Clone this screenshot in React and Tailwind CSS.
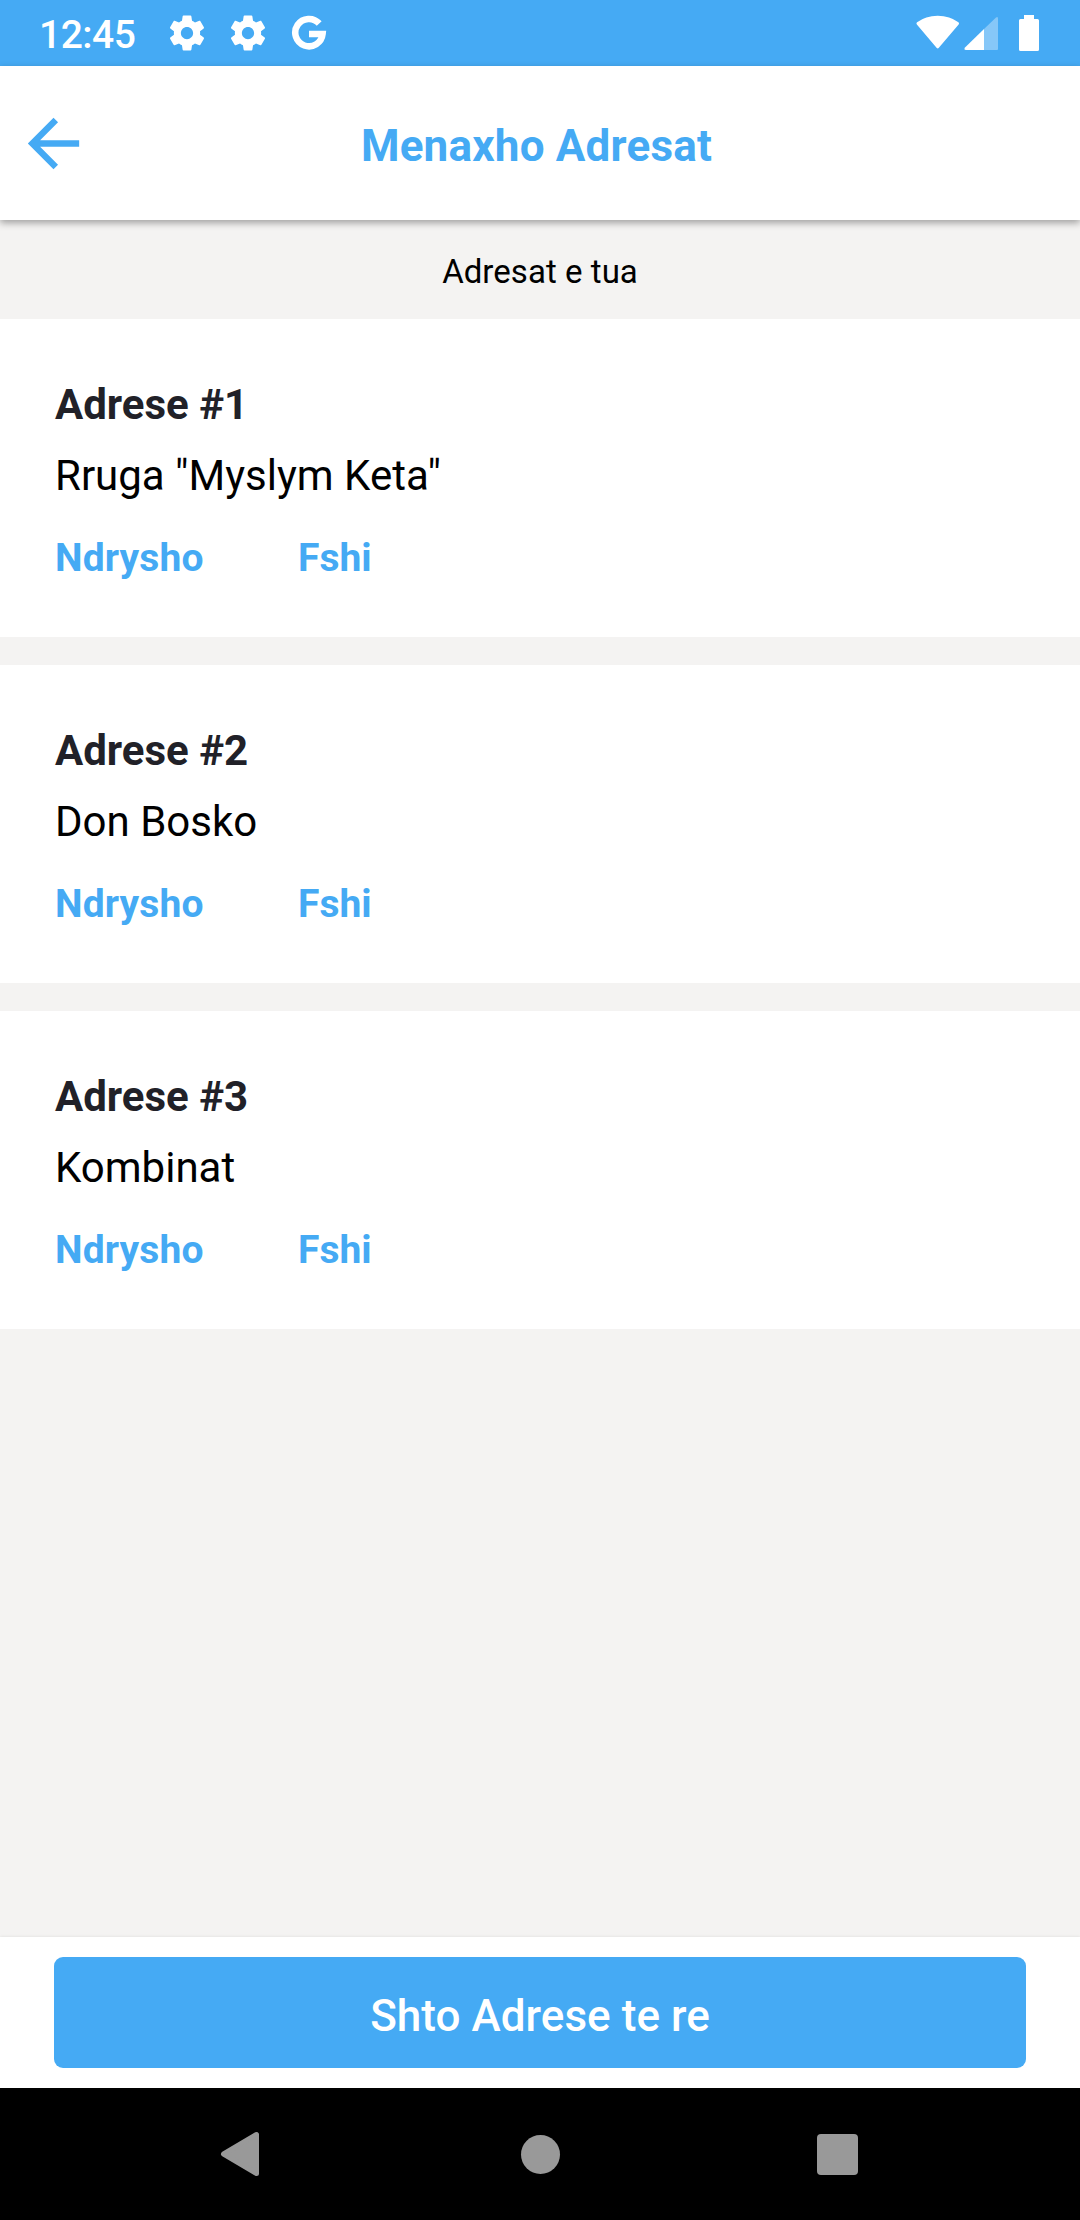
const addresses = ['Rruga "Myslym Keta"', 'Don Bosko', 'Kombinat'];

function Gear() {
  return (
    <svg className="size-[42px] shrink-0" viewBox="0 0 24 24" fill="white">
      <path d="M19.43 12.98c.04-.32.07-.64.07-.98s-.03-.66-.07-.98l2.11-1.65c.19-.15.24-.42.12-.64l-2-3.46c-.12-.22-.39-.3-.61-.22l-2.49 1c-.52-.4-1.08-.73-1.69-.98l-.38-2.65C14.46 2.18 14.25 2 14 2h-4c-.25 0-.46.18-.49.42l-.38 2.65c-.61.25-1.17.59-1.69.98l-2.49-1c-.23-.09-.49 0-.61.22l-2 3.46c-.13.22-.07.49.12.64l2.11 1.65c-.04.32-.07.65-.07.98s.03.66.07.98l-2.11 1.65c-.19.15-.24.42-.12.64l2 3.46c.12.22.39.3.61.22l2.49-1c.52.4 1.08.73 1.69.98l.38 2.65c.03.24.24.42.49.42h4c.25 0 .46-.18.49-.42l.38-2.65c.61-.25 1.17-.59 1.69-.98l2.49 1c.23.09.49 0 .61-.22l2-3.46c.12-.22.07-.49-.12-.64l-2.11-1.65zM12 15.5c-1.93 0-3.5-1.57-3.5-3.5s1.57-3.5 3.5-3.5 3.5 1.57 3.5 3.5-1.57 3.5-3.5 3.5z" />
    </svg>
  );
}

function StatusBar() {
  return (
    <div className="flex h-[66px] shrink-0 items-center bg-[#45aaf4] text-white">
      <span className="ml-[39px] w-[126.5px] pt-[4px] text-[39px] leading-none font-medium tracking-[-0.5px]">12:45</span>
      <Gear />
      <div className="w-[19px]" />
      <Gear />
      <svg className="ml-[22px] size-[36px]" viewBox="0 0 36 36" fill="none" stroke="white" strokeWidth="6.5">
        <path d="M28.2 8.500 A13.700 13.700 0 1 0 31.600 19 H18" />
      </svg>
      <svg className="ml-auto h-[36px] w-[46px]" viewBox="0 0 46 36" fill="white" stroke="white" strokeWidth="3" strokeLinejoin="round">
        <path d="M4 8.500 Q12 2.200 23.700 2.200 Q35.500 2.200 43.500 8.500 L23.700 31.800 Z" />
      </svg>
      <svg className="ml-[3px] h-[36px] w-[36px]" viewBox="0 0 36 36" fill="white" strokeLinejoin="round">
        <path d="M35 3.500 Q35 1 33 2.500 L21 14 V35 H34 Q35 35 35 34 Z" fillOpacity="0.35" />
        <path d="M21 14 L2 32.500 Q0.500 35 3 35 H21 Z" />
      </svg>
      <svg className="mr-[41px] ml-[20px] h-[36px] w-[20px]" viewBox="0 0 20 36" fill="white">
        <path d="M5 0 H15 V4 H18.500 Q20 4 20 5.500 V34.500 Q20 36 18.500 36 H1.500 Q0 36 0 34.500 V5.500 Q0 4 1.500 4 H5 Z" />
      </svg>
    </div>
  );
}

function NavBar() {
  return (
    <nav className="flex h-[132px] shrink-0 items-center bg-black">
      <svg className="ml-[220px] h-[46px] w-[39px]" viewBox="0 0 39 46" fill="#999" stroke="#999" strokeWidth="5" strokeLinejoin="round">
        <path d="M3.500 23 L36.500 3.500 V42.500 Z" />
      </svg>
      <div className="ml-[262px] size-[39px] rounded-full bg-[#999]" />
      <div className="ml-[257px] size-[41px] rounded-[4px] bg-[#999]" />
    </nav>
  );
}

export default function App() {
  return (
    <div className="flex h-[2220px] w-[1080px] flex-col overflow-hidden bg-[#f4f3f2] font-['Roboto',sans-serif] text-black">
      <StatusBar />
      <header className="z-10 flex h-[154px] shrink-0 items-center bg-white shadow-[0_3px_7px_rgba(0,0,0,0.34)]">
        <svg className="ml-[15px] size-[77px]" viewBox="0 0 24 24" fill="#45aaf4">
          <path d="M20 11H7.83l5.59-5.590L12 4l-8 8 8 8 1.410-1.410L7.830 13H20v-2z" />
        </svg>
        <h1 className="mr-[99px] flex-1 pt-[6px] text-center text-[44px] font-bold tracking-[0.2px] text-[#45aaf4]">Menaxho Adresat</h1>
      </header>
      <p className="flex h-[99px] shrink-0 items-center justify-center pt-[4px] text-[33px] tracking-[0.05px]">Adresat e tua</p>
      <div className="flex flex-col gap-[28px]">
        {addresses.map((a, i) => (
          <section key={a} className="h-[318px] bg-white pt-[60px] pl-[55px]">
            <h2 className="h-[71px] text-[42px] leading-[51px] font-bold text-[#212128]">Adrese #{i + 1}</h2>
            <p className="h-[83px] text-[42px] leading-[51px]">{a}</p>
            <div className="flex text-[39px] leading-[51px] font-bold text-[#45aaf4]">
              <span className="w-[243px] tracking-[0.15px]">Ndrysho</span>
              <span>Fshi</span>
            </div>
          </section>
        ))}
      </div>
      <div className="mt-auto flex h-[151px] shrink-0 items-center justify-center bg-white shadow-[0_0_3px_rgba(0,0,0,0.1)]">
        <button className="h-[111px] w-[972px] rounded-[9px] bg-[#45aaf4] pt-[6px] text-[44px] font-medium tracking-[0.05px] text-white">Shto Adrese te re</button>
      </div>
      <NavBar />
    </div>
  );
}
